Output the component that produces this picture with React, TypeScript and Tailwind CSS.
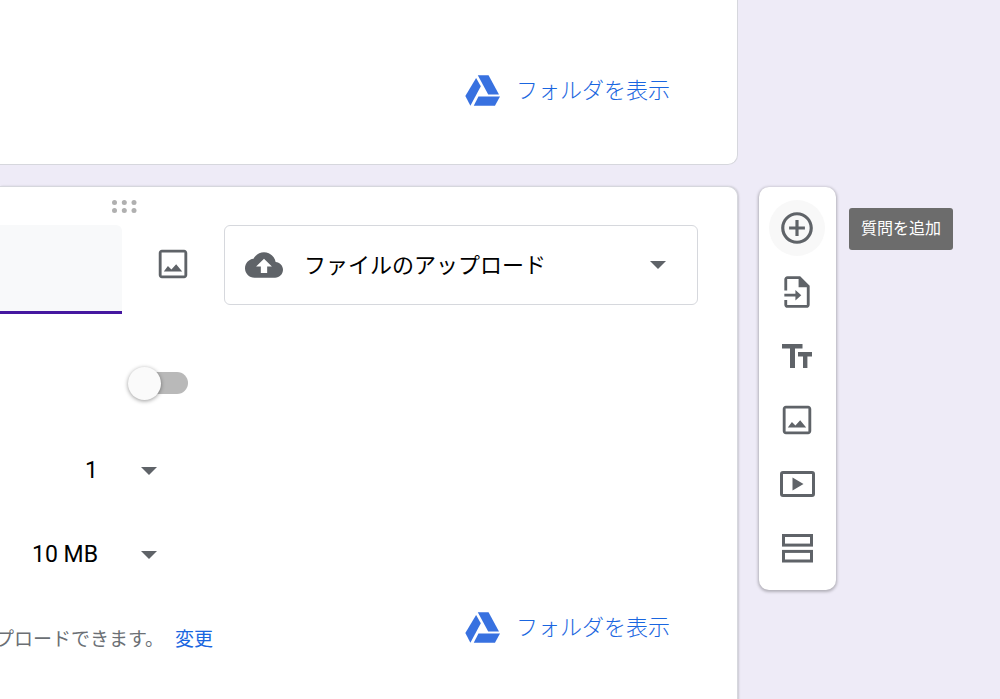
import type { ReactNode } from 'react'

function DriveIcon() {
  return (
    <svg width="35" height="31" viewBox="46 44 104 92" fill="#3871e0" aria-hidden="true">
      <path d="M79 53l14 24-31 58-15-29z" />
      <path d="M84 45h32l31 57h-32z" />
      <path d="M86 108h64l-15 27H72z" />
    </svg>
  )
}

function ImageIcon() {
  return (
    <svg width="38" height="38" viewBox="0 0 24 24" fill="currentColor" aria-hidden="true">
      <path d="M19 3H5c-1.1 0-2 .9-2 2v14c0 1.1.9 2 2 2h14c1.1 0 2-.9 2-2V5c0-1.1-.9-2-2-2zm.2 16.2H4.8V4.8h14.4z" />
      <path d="M14 12.2l-3 3.2-2.2-2.2-2.6 3.6h11.6z" />
    </svg>
  )
}

function CloudIcon() {
  return (
    <svg className="pointer-events-none col-start-1 row-start-1 ml-[21px]" width="38" height="38" viewBox="0 0 24 24" fill="#5f6368" aria-hidden="true">
      <path d="M19.35 10.04C18.67 6.59 15.64 4 12 4 9.11 4 6.6 5.64 5.35 8.04 2.34 8.36 0 10.91 0 14c0 3.31 2.69 6 6 6h13c2.76 0 5-2.24 5-5 0-2.64-2.05-4.78-4.65-4.96zM14 13v4h-4v-4H7l5-5 5 5h-3z" />
    </svg>
  )
}

function Caret() {
  return (
    <svg width="16" height="8" viewBox="0 0 16 8" fill="#5f6368" aria-hidden="true">
      <path d="M0 0h16L8 8z" />
    </svg>
  )
}

function AddIcon() {
  return (
    <svg width="38" height="38" viewBox="0 0 24 24" fill="currentColor" aria-hidden="true">
      <path d="M13 7h-2v4H7v2h4v4h2v-4h4v-2h-4V7zm-1-5C6.48 2 2 6.48 2 12s4.48 10 10 10 10-4.48 10-10S17.52 2 12 2zm0 18c-4.41 0-8-3.59-8-8s3.59-8 8-8 8 3.59 8 8-3.59 8-8 8z" />
    </svg>
  )
}

function ImportIcon() {
  return (
    <svg width="38" height="38" viewBox="0 0 24 24" fill="currentColor" aria-hidden="true">
      <path d="M14 2H6c-1.1 0-2 .9-2 2v7h1.8V3.8H13V9h5.2v11.2H5.8V17H4v3c0 1.1.9 2 2 2h12c1.1 0 2-.9 2-2V8l-6-6z" />
      <path d="M4 13.1h7v-2.4l3.7 3.3-3.7 3.3v-2.4H4z" />
    </svg>
  )
}

function TextIcon() {
  return (
    <svg width="30" height="24" viewBox="0 0 30 24" fill="currentColor" aria-hidden="true">
      <path d="M0 0h20.5v4.5H13V24H8V4.5H0z" />
      <path d="M16 8h14v4.5h-4.6V24H21V12.5h-5z" />
    </svg>
  )
}

function VideoIcon() {
  return (
    <svg width="35" height="26" viewBox="0 0 35 26" aria-hidden="true">
      <rect x="1.5" y="1.5" width="32" height="23" rx="1.5" fill="none" stroke="currentColor" strokeWidth="3" />
      <path d="M12.5 6.5v13L23.5 13z" fill="currentColor" />
    </svg>
  )
}

function SectionIcon() {
  return (
    <svg width="31" height="29" viewBox="0 0 31 29" fill="none" stroke="currentColor" strokeWidth="3" aria-hidden="true">
      <rect x="1.5" y="1.5" width="28" height="9.6" />
      <rect x="1.5" y="17.4" width="28" height="9.6" />
    </svg>
  )
}

function FolderLink() {
  return (
    <a href="#folder" className="flex h-10 items-center gap-4 text-[22px] font-light whitespace-nowrap text-[#1a66e0]">
      <DriveIcon />
      フォルダを表示
    </a>
  )
}

function SmallSelect({ label, options }: { label: string; options: string[] }) {
  return (
    <div className="grid h-14 w-40 grid-cols-1 items-center">
      <select
        aria-label={label}
        className="col-start-1 row-start-1 h-full w-full appearance-none bg-transparent pr-[62px] text-[23px] text-black [text-align-last:right]"
      >
        {options.map((option) => (
          <option key={option}>{option}</option>
        ))}
      </select>
      <span className="pointer-events-none col-start-1 row-start-1 justify-self-end pr-[3px]">
        <Caret />
      </span>
    </div>
  )
}

function ToolButton({ label, active, children }: { label: string; active?: boolean; children: ReactNode }) {
  return (
    <div className="relative">
      <button
        type="button"
        aria-label={label}
        className={active ? 'flex size-14 items-center justify-center rounded-full bg-[#f8f8f8]' : 'flex size-14 items-center justify-center rounded-full'}
      >
        {children}
      </button>
      {active && (
        <span
          role="tooltip"
          className="absolute top-2 left-full ml-6 flex h-[42px] items-center rounded-[3px] bg-[#6c6c6c] px-3 text-base whitespace-nowrap text-white"
        >
          {label}
        </span>
      )}
    </div>
  )
}

export default function App() {
  return (
    <div className="flex min-h-screen overflow-hidden bg-[#eeebf7] font-[Roboto,'Noto_Sans_CJK_JP',sans-serif]">
      <main className="flex min-w-0 flex-1 flex-col gap-[21px]">
        <section className="flex justify-end rounded-br-[10px] border-r border-b border-[#d6d7dd] bg-white pt-[70px] pr-[67px] pb-[54px]">
          <FolderLink />
        </section>

        <section className="flex flex-1 flex-col rounded-tr-[10px] border-t border-r border-[#d6d7dd] bg-white pr-[39px] pb-8 shadow-[1px_0_2px_rgba(0,0,0,0.15)]">
          <div className="flex h-[38px] items-center justify-end pr-[561px]">
            <svg width="25" height="13" viewBox="0 0 25 13" fill="#b0b0b0" aria-hidden="true">
              <circle cx="2.5" cy="2.5" r="2.5" />
              <circle cx="12.3" cy="2.5" r="2.5" />
              <circle cx="22" cy="2.5" r="2.5" />
              <circle cx="2.5" cy="10.5" r="2.5" />
              <circle cx="12.3" cy="10.5" r="2.5" />
              <circle cx="22" cy="10.5" r="2.5" />
            </svg>
          </div>

          <div className="flex items-start gap-[27px]">
            <input
              type="text"
              aria-label="質問"
              className="h-[89px] min-w-0 flex-1 rounded-tr-md border-b-[3px] border-[#4517a0] bg-[#f8f9fa] outline-none"
            />
            <button type="button" aria-label="画像を追加" className="flex h-[77px] w-12 items-center justify-center text-[#5f6368]">
              <ImageIcon />
            </button>
            <div className="grid h-20 w-[474px] grid-cols-1 items-center">
              <select
                aria-label="質問の形式"
                className="col-start-1 row-start-1 h-full w-full appearance-none rounded-md border border-[#d6d8dd] bg-white pl-[79px] text-[22px] text-black"
              >
                <option>ファイルのアップロード</option>
              </select>
              <CloudIcon />
              <span className="pointer-events-none col-start-1 row-start-1 justify-self-end pr-8">
                <Caret />
              </span>
            </div>
          </div>

          <div className="flex pt-[41px]">
            <div className="flex min-w-0 flex-1 flex-col items-end gap-7">
              <div className="mb-1 flex h-14 items-center pr-[26px]">
                <input
                  type="checkbox"
                  role="switch"
                  aria-label="特定のファイル形式のみ許可"
                  className="flex h-[22px] w-14 appearance-none items-center rounded-full bg-[#b9b9b9] before:-ml-1 before:size-[33px] before:shrink-0 before:rounded-full before:bg-[#fafafa] before:shadow-[0_1px_4px_rgba(0,0,0,0.4)]"
                />
              </div>
              <div className="pr-[54px]">
                <SmallSelect label="ファイルの最大数" options={['1', '5', '10']} />
              </div>
              <div className="pr-[54px]">
                <SmallSelect label="最大ファイルサイズ" options={['10 MB', '100 MB', '1 GB']} />
              </div>
              <div className="flex h-[58px] items-center gap-[11px] pr-px text-[19px] whitespace-nowrap">
                <p className="text-[#6b6f74]">プロードできます。</p>
                <a href="#change" className="text-[#1a66e0]">変更</a>
              </div>
            </div>
            <div className="flex w-[484px] items-end justify-end pr-7 pb-[22px]">
              <FolderLink />
            </div>
          </div>
        </section>
      </main>

      <aside className="w-[262px] shrink-0 pt-[187px] pl-[21px]">
        <div
          role="toolbar"
          aria-label="質問ツール"
          className="flex w-[77px] flex-col items-start gap-2 rounded-[10px] bg-white pt-[13px] pb-3.5 pl-2.5 text-[#5f6368] shadow-[0_1px_3px_1px_rgba(0,0,0,0.25)]"
        >
          <ToolButton label="質問を追加" active>
            <AddIcon />
          </ToolButton>
          <ToolButton label="質問をインポート">
            <ImportIcon />
          </ToolButton>
          <ToolButton label="タイトルと説明を追加">
            <TextIcon />
          </ToolButton>
          <ToolButton label="画像を追加">
            <ImageIcon />
          </ToolButton>
          <ToolButton label="動画を追加">
            <VideoIcon />
          </ToolButton>
          <ToolButton label="セクションを追加">
            <SectionIcon />
          </ToolButton>
        </div>
      </aside>
    </div>
  )
}
